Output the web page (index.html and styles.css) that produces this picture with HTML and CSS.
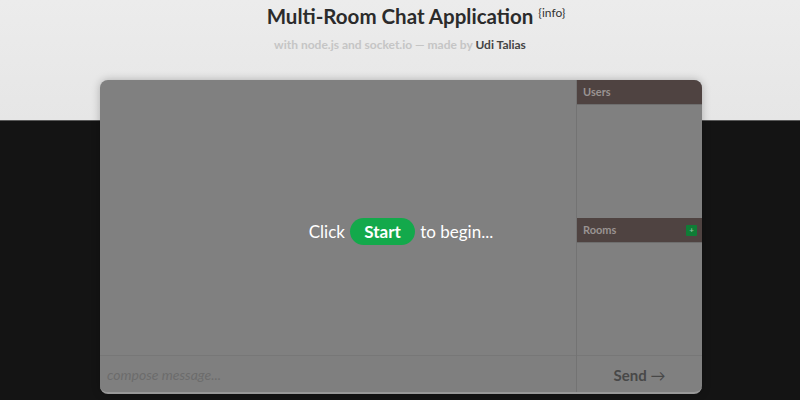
FILE: index.html
```html
<!DOCTYPE html>
<html>
<head>
<meta charset="utf-8">
<link rel="stylesheet" href="styles.css">
</head>
<body>
<div class="top-bg"></div>
<header class="head">
  <h1 class="title">Multi-Room Chat Application<sup class="info">{info}</sup></h1>
  <p class="sub">with node.js and socket.io — made by <span class="author">Udi Talias</span></p>
</header>
<main class="chat">
  <section class="main-col">
    <div class="messages"></div>
    <div class="compose">compose message...</div>
  </section>
  <aside class="side">
    <div class="side-head">Users</div>
    <div class="side-body users"></div>
    <div class="side-head">Rooms <span class="plus">+</span></div>
    <div class="side-body rooms"></div>
    <div class="send">Send <span class="arrow">→</span></div>
  </aside>
  <div class="prompt">Click <span class="start">Start</span> to begin...</div>
</main>
</body>
</html>
```
FILE: styles.css
```css
html, body { margin: 0; padding: 0; }
body {
  width: 800px;
  height: 400px;
  overflow: hidden;
  background: #141414;
  font-family: Lato, "Open Sans", sans-serif;
  position: relative;
}
.top-bg {
  position: absolute;
  left: 0; top: 0;
  width: 800px; height: 120px;
  background: linear-gradient(#ececec, #e6e6e6);
  border-bottom: 1px solid #5a5a5a;
  z-index: 0;
}
.head { position: relative; z-index: 1; text-align: center; padding-top: 0; }
.title {
  margin: 0;
  font-size: 20.5px;
  font-weight: 700;
  color: #2b2b2b;
  line-height: 26px;
}
.info {
  font-size: 12px;
  font-weight: 400;
  vertical-align: 7px;
  color: #333;
  display: inline-block;
  width: 28px;
  margin-left: 5px;
  margin-right: -33px;
  text-align: left;
}
.sub {
  margin: 9px 0 0;
  font-size: 12px;
  font-weight: 700;
  color: #c5c5c5;
  line-height: 14px;
}
.author { color: #444; }
.chat {
  position: relative;
  z-index: 1;
  margin: 28px 0 0 100px;
  width: 602px;
  height: 314px;
  display: flex;
  border-radius: 8px;
  overflow: hidden;
  background: #808080;
  box-shadow: 0 0 8px rgba(0,0,0,0.25);
  border-bottom: 2px solid #999;
  box-sizing: border-box;
}
.main-col { flex: 1; display: flex; flex-direction: column; }
.messages { flex: 1; }
.prompt {
  position: absolute;
  left: 0; right: 0;
  top: 138px;
  text-align: center;
  color: #fff;
  font-size: 17px;
  line-height: 28px;
}
.start {
  display: inline-block;
  background: #13a94b;
  border-radius: 14px;
  padding: 0 14px;
  font-weight: 700;
  line-height: 27px;
  margin: 0 1px;
}
.compose {
  height: 36px;
  border-top: 1px solid #777;
  background: #7f7f7f;
  color: #6c6c6c;
  font-style: italic;
  font-size: 14px;
  line-height: 38px;
  padding-left: 7px;
}
.side {
  width: 125px;
  border-left: 1px solid #737373;
  display: flex;
  flex-direction: column;
}
.side-head {
  height: 24px;
  background: #4f4341;
  color: #9a9392;
  font-size: 11px;
  font-weight: 700;
  line-height: 24px;
  padding: 0 6px;
  display: flex;
  justify-content: space-between;
  align-items: center;
  border-bottom: 1px solid #6e6e6e;
}
.users { height: 113px; }
.rooms { flex: 1; }
.plus {
  width: 11px; height: 11px;
  background: #0f7d36;
  color: #8fc09f;
  font-size: 8px;
  line-height: 11px;
  text-align: center;
  border-radius: 1px;
  margin-right: -1px;
}
.send {
  height: 36px;
  border-top: 1px solid #777;
  color: #484848;
  font-size: 15px;
  font-weight: 700;
  text-align: center;
  line-height: 38px;
}
.arrow { font-weight: 400; font-size: 15px; }
```
